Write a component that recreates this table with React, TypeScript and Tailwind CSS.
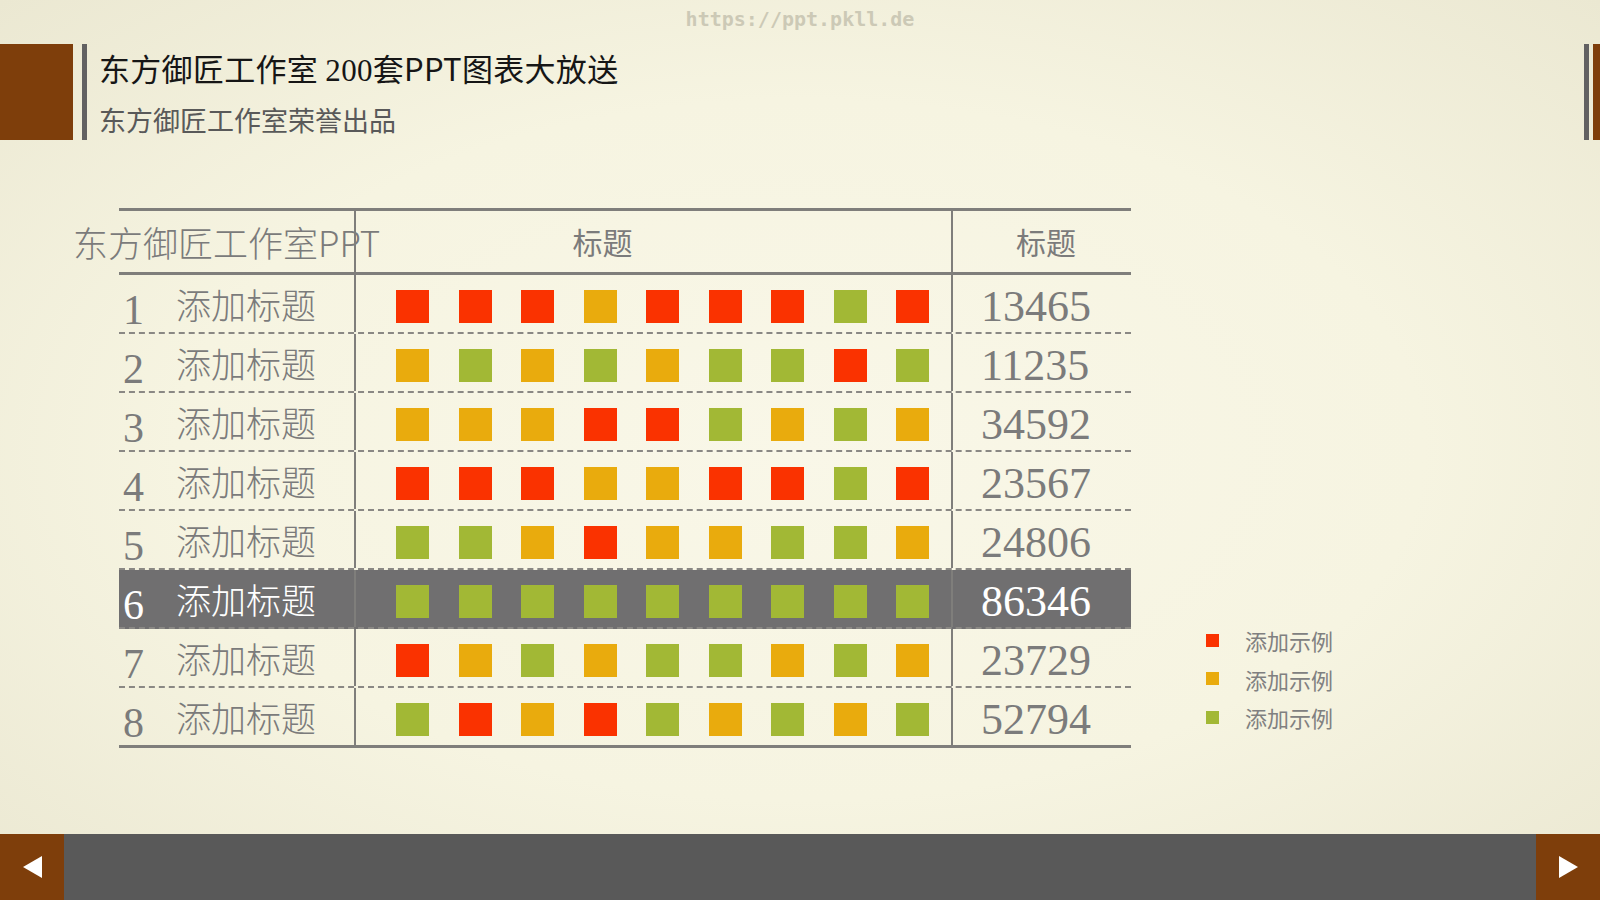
import React from "react";

type Cell = "R" | "O" | "G";

type Row = {
    no: number
    label: string
    cells: Cell[]
    value: string
    active?: boolean
}

const rows: Row[] = [
    {no: 1, label: "添加标题", cells: ["R", "R", "R", "O", "R", "R", "R", "G", "R"], value: "13465"},
    {no: 2, label: "添加标题", cells: ["O", "G", "O", "G", "O", "G", "G", "R", "G"], value: "11235"},
    {no: 3, label: "添加标题", cells: ["O", "O", "O", "R", "R", "G", "O", "G", "O"], value: "34592"},
    {no: 4, label: "添加标题", cells: ["R", "R", "R", "O", "O", "R", "R", "G", "R"], value: "23567"},
    {no: 5, label: "添加标题", cells: ["G", "G", "O", "R", "O", "O", "G", "G", "O"], value: "24806"},
    {no: 6, label: "添加标题", cells: ["G", "G", "G", "G", "G", "G", "G", "G", "G"], value: "86346", active: true},
    {no: 7, label: "添加标题", cells: ["R", "O", "G", "O", "G", "G", "O", "G", "O"], value: "23729"},
    {no: 8, label: "添加标题", cells: ["G", "R", "O", "R", "G", "O", "G", "O", "G"], value: "52794"},
];

const cellColor: Record<Cell, string> = {
    R: "bg-[#fa3200]",
    O: "bg-[#e9ab0d]",
    G: "bg-[#a2b835]",
};

const cjk = "font-['Noto_Sans_CJK_SC',sans-serif]";
const serif = "font-['Liberation_Serif',serif]";

function TableRow({row, last}: { row: Row, last: boolean }) {
    const text = row.active ? "text-white" : "text-[#7b7b7b]";
    return (
        <div className={"grid grid-cols-[235px_597px_180px] " +
            (last ? "h-[60px] border-b-[3px] border-solid border-[#7f7e7b] " : "h-[59px] border-b-2 border-dashed border-[#8a8884] ") +
            (row.active ? "bg-[#706f70]" : "")}>
            <div className="flex items-center pl-[4px]">
                <span className={serif + " text-[42px] leading-none w-[53px] pt-[12px] " + text}>{row.no}</span>
                <span className={cjk + " font-light text-[35px] leading-none " + text}>{row.label}</span>
            </div>
            <div className="flex items-center gap-[29.5px] pl-[40px] pt-[6px] border-l-2 border-[#7f7e7b]">
                {row.cells.map((c, i) => (
                    <div key={i} className={"w-[33px] h-[33px] " + cellColor[c]}/>
                ))}
            </div>
            <div className="flex items-center pl-[28px] border-l-2 border-[#7f7e7b]">
                <span className={serif + " text-[44px] leading-none pt-[6px] " + text}>{row.value}</span>
            </div>
        </div>
    );
}

export default function App() {
    return (
        <div className="w-[1600px] h-[900px] flex flex-col overflow-hidden bg-[radial-gradient(ellipse_at_center,#f9f7e8_0%,#f6f4e1_55%,#ebe8d2_100%)]">
            <div className="h-[44px] flex justify-center pt-[6px]">
                <span className="font-['DejaVu_Sans_Mono',monospace] font-bold text-[20px] leading-[26px] text-[#ccc9b6]">https://ppt.pkll.de</span>
            </div>

            <div className="h-[96px] flex">
                <div className="w-[73px] bg-[#7e3e0b]"/>
                <div className="w-[5px] ml-[9px] bg-[#626162]"/>
                <div className={"flex-1 flex flex-col pl-[12px] pt-[4px] " + cjk}>
                    <div className="text-[31px] leading-[40px] text-[#161616] whitespace-nowrap tracking-[0.3px]">
                        东方御匠工作室 <span className={serif}>200</span>套PPT图表大放送
                    </div>
                    <div className="mt-[11px] text-[27px] leading-[36px] text-[#595959]">东方御匠工作室荣誉出品</div>
                </div>
                <div className="w-[5px] bg-[#626162]"/>
                <div className="w-[7px] ml-[4px] bg-[#7e3e0b]"/>
            </div>

            <div className="flex-1 flex items-start pt-[68px]">
                <div className="ml-[119px] w-[1012px] border-t-[3px] border-[#7f7e7b]">
                    <div className="grid grid-cols-[235px_597px_180px] h-[64px] border-b-[3px] border-[#7f7e7b]">
                        <div className="flex items-center">
                            <span className={cjk + " font-light -ml-[46px] whitespace-nowrap text-[35px] leading-none text-[#7b7b7b]"}>东方御匠工作室PPT</span>
                        </div>
                        <div className={"flex items-center justify-center pr-[102px] border-l-2 border-[#7f7e7b] text-[30px] text-[#7b7b7b] " + cjk}>标题</div>
                        <div className={"flex items-center justify-center pl-[8px] border-l-2 border-[#7f7e7b] text-[30px] text-[#7b7b7b] " + cjk}>标题</div>
                    </div>
                    {rows.map((row, i) => (
                        <TableRow key={row.no} row={row} last={i === rows.length - 1}/>
                    ))}
                </div>

                <div className={"ml-[75px] mt-[417px] flex flex-col gap-[8.5px] " + cjk}>
                    {(["R", "O", "G"] as Cell[]).map(c => (
                        <div key={c} className="flex items-center h-[30px]">
                            <div className={"w-[13px] h-[13px] " + cellColor[c]}/>
                            <span className="ml-[26px] text-[22px] leading-[30px] text-[#808080]">添加示例</span>
                        </div>
                    ))}
                </div>
            </div>

            <div className="h-[66px] flex justify-between bg-[#595959]">
                <div className="w-[64px] bg-[#7e3e0b] flex items-center justify-center">
                    <svg width="19" height="22" viewBox="0 0 19 22">
                        <polygon points="19,0 19,22 0,11" fill="#ffffff"/>
                    </svg>
                </div>
                <div className="w-[64px] bg-[#7e3e0b] flex items-center justify-center">
                    <svg width="19" height="22" viewBox="0 0 19 22">
                        <polygon points="0,0 0,22 19,11" fill="#ffffff"/>
                    </svg>
                </div>
            </div>
        </div>
    );
}
